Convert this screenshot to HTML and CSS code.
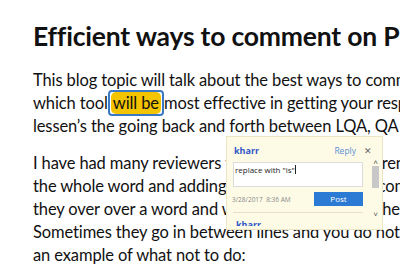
FILE: index.html
```html
<!DOCTYPE html>
<html>
<head>
<meta charset="utf-8">
<link rel="stylesheet" href="styles.css">
</head>
<body>
<div class="page">
  <h1 class="title">Efficient ways to comment on PDF files</h1>
  <p class="para">
    <span class="line">This blog topic will talk about the best ways to comment on PDF files and</span>
    <span class="line">which tool <span class="hl"><span class="hl-in">will be</span></span> most effective in getting your response across and</span>
    <span class="line">lessen’s the going back and forth between LQA, QA and translators.</span>
  </p>
  <p class="para">
    <span class="line">I have had many reviewers that all use many different methods, striking</span>
    <span class="line">the whole word and adding a sticky notes to the comment box,</span>
    <span class="line">they over over a word and write comments over there, and</span>
    <span class="line">Sometimes they go in between lines and you do not know which</span>
    <span class="line">an example of what not to do:</span>
  </p>
</div>
<div class="popup">
  <div class="pop-head">
    <span class="author">kharr</span>
    <span class="reply">Reply</span>
    <span class="close">✕</span>
  </div>
  <div class="pop-body">
    <div class="pop-main">
      <div class="textbox">replace with "is"<span class="caret"></span></div>
      <div class="pop-foot">
        <span class="date">3/28/2017&nbsp; 8:36 AM</span>
        <span class="post">Post</span>
      </div>
      <div class="sep"></div>
      <div class="author next">kharr</div>
    </div>
    <div class="scroll">
      <span class="arrow">&#708;</span>
      <span class="thumb"></span>
      <span class="arrow down">&#709;</span>
    </div>
  </div>
</div>
</body>
</html>
```
FILE: styles.css
```css
html, body {
  margin: 0;
  padding: 0;
  background: #ffffff;
  overflow: hidden;
  width: 400px;
  height: 280px;
}
.page {
  padding: 20px 0 0 33px;
  font-family: Lato, "Open Sans", sans-serif;
  color: #111111;
  white-space: nowrap;
}
.title {
  margin: 0;
  font-size: 26.5px;
  font-weight: 700;
  line-height: 32px;
  letter-spacing: -0.2px;
}
.para {
  margin: 17px 0 0 0;
  font-size: 16.5px;
  letter-spacing: -0.12px;
  line-height: 23px;
}
.para + .para {
  margin-top: 14px;
}
.line {
  display: block;
}
.hl {
  border: 2px solid #3b78c4;
  border-radius: 4px;
  padding: 1px;
  margin: 0 -4px;
}
.hl-in {
  background: #f5c400;
  border-radius: 5px;
  padding: 1px 2px;
}
.popup {
  position: absolute;
  left: 226px;
  top: 136px;
  width: 155px;
  height: 92px;
  background: #fdfbe6;
  border: 1px solid #ece6c4;
  font-family: "Open Sans", sans-serif;
  overflow: hidden;
}
.pop-head {
  display: flex;
  align-items: center;
  padding: 6px 7px 0 7px;
  height: 14px;
}
.author {
  color: #2d57c8;
  font-weight: 700;
  font-size: 9px;
}
.reply {
  margin-left: auto;
  color: #5b8fd6;
  font-size: 8.5px;
}
.close {
  margin-left: 8px;
  margin-right: 3px;
  color: #666;
  font-size: 9px;
}
.pop-body {
  display: flex;
  padding-left: 6px;
  height: 69px;
  overflow: hidden;
}
.pop-main {
  width: 130px;
  padding-top: 5px;
}
.textbox {
  background: #ffffff;
  border: 1px solid #dcdcdc;
  font-size: 8px;
  color: #222;
  padding: 2px 1px 0 1px;
  box-sizing: border-box;
  height: 25px;
  line-height: 10px;
}
.caret {
  display: inline-block;
  width: 1px;
  height: 9px;
  background: #222;
  vertical-align: -1px;
}
.pop-foot {
  display: flex;
  align-items: center;
  justify-content: space-between;
  margin-top: 5px;
}
.date {
  font-size: 6.5px;
  color: #8a8a8a;
  margin-left: -1px;
}
.post {
  display: block;
  width: 49px;
  height: 14px;
  background: #2b7bd4;
  color: #ffffff;
  font-size: 8px;
  text-align: center;
  line-height: 14px;
}
.sep {
  height: 1px;
  background: #e6e0c6;
  margin-top: 6px;
}
.next {
  margin-top: 5px;
  padding-left: 3px;
}
.scroll {
  margin-left: 9px;
  width: 7px;
  display: flex;
  flex-direction: column;
  align-items: center;
  padding-top: 1px;
}
.arrow {
  font-size: 8px;
  color: #555;
  line-height: 7px;
  height: 7px;
}
.thumb {
  display: block;
  width: 7px;
  height: 22px;
  background: #c8c8c8;
  margin-top: 1px;
}
.down {
  margin-top: 22px;
}
```
